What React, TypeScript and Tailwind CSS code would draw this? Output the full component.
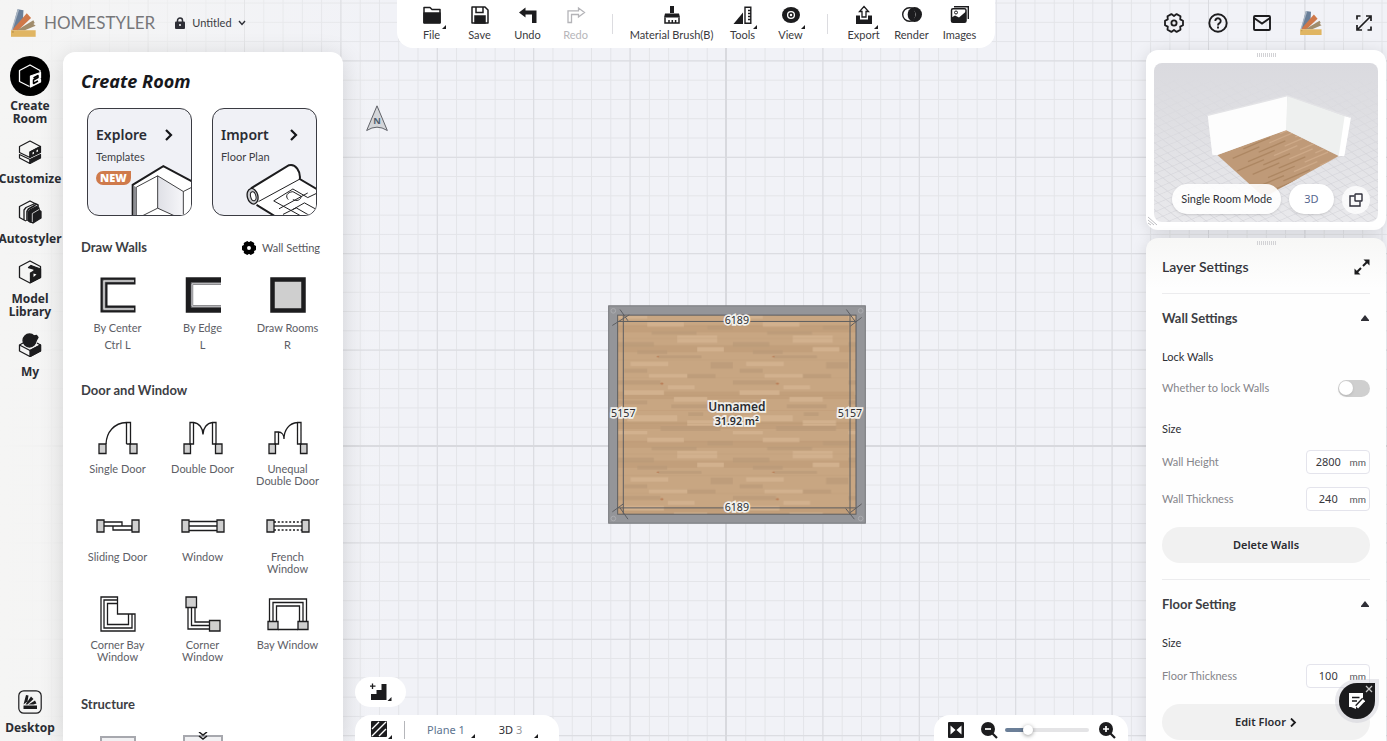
import React, { useState } from "react";

type Icon = () => React.ReactElement;

const INK = "#1c1c1e";

/* ---------- brand ---------- */

function FanLogo({ className }: { className: string }) {
  return (
    <svg viewBox="0 0 76 84" className={className} aria-hidden="true">
      <path d="M20 0 L38 3 L36 34 L8 64 L4 62Z" fill="#6a7f99" />
      <path d="M48 12 L61 27 L22 64 L3 64Z" fill="#cf7849" />
      <path d="M68 34 L72 42 L68 45 L75 50 L42 64 L18 64Z" fill="#a08c6c" />
      <path d="M1 64 L20 0 L25 1 L5 64Z" fill="#a9b5c3" />
      <path d="M0 64 H75 V84 H0Z" fill="#e0b562" />
      <circle cx="6" cy="69" r="1.6" fill="#8a6a2e" />
    </svg>
  );
}

/* ---------- toolbar icons ---------- */

const FileIcon: Icon = () => (
  <svg viewBox="0 0 20 20" className="size-5" fill="none" stroke={INK} strokeWidth="1.5" strokeLinejoin="round">
    <path d="M2 17.500V2.500h6l2 2h8v13Z" />
    <path d="M2 8h16v10H2Z" fill={INK} />
  </svg>
);
const SaveIcon: Icon = () => (
  <svg viewBox="0 0 20 20" className="size-5" fill="none" stroke={INK} strokeWidth="1.5">
    <path d="M2 2h13l3 3v13H2Z" strokeLinejoin="round" />
    <path d="M6 2v5.500h7V2" />
    <path d="M5 11h10v7H5Z" fill={INK} />
  </svg>
);
const UndoIcon: Icon = () => (
  <svg viewBox="0 0 20 20" className="size-5" fill={INK}>
    <path d="M1 7.500 7.500 2.500V5.500H18.500V18H14V9.500H7.500V12.500Z" />
  </svg>
);
const RedoIcon: Icon = () => (
  <svg viewBox="0 0 20 20" className="size-5" fill="none" stroke="#b4b4b8" strokeWidth="1.300">
    <path d="M18.500 7.500 12.500 3V5.800H2V17.500H5.500V9.500H12.500V12Z" />
  </svg>
);
const BrushIcon: Icon = () => (
  <svg viewBox="0 0 20 20" className="size-5" fill={INK}>
    <path d="M8 1h4v7H8Z M3 8.500h14l1 4H2Z" />
    <path d="M3 12.500v5.500h14v-5.500M7 18v-3M10.300 18v-3M13.600 18v-3" fill="none" stroke={INK} strokeWidth="1.500" />
  </svg>
);
const ToolsIcon: Icon = () => (
  <svg viewBox="0 0 20 20" className="size-5" fill={INK}>
    <path d="M10 7.500V19H0.500Z" />
    <path d="M12 2.200h5.800v16H12ZM15 5.500h3M15 8.500h3M15 11.500h3M15 14.500h3" fill="none" stroke={INK} strokeWidth="1.400" />
  </svg>
);
const ViewIcon: Icon = () => (
  <svg viewBox="0 0 20 20" className="size-5">
    <ellipse cx="10" cy="10" rx="9" ry="8" fill={INK} />
    <circle cx="10" cy="10" r="3.400" fill="none" stroke="#fff" strokeWidth="1.300" />
    <circle cx="10" cy="10" r="1.200" fill="#fff" />
  </svg>
);
const ExportIcon: Icon = () => (
  <svg viewBox="0 0 20 20" className="size-5">
    <path d="M2 10.500h4v4h8v-4h4V19H2Z" fill={INK} />
    <path d="M10 1.500 14.500 6.500H12V12H8V6.500H5.500Z" fill="#fff" stroke={INK} strokeWidth="1.300" />
  </svg>
);
const RenderIcon: Icon = () => (
  <svg viewBox="0 0 20 20" className="size-5">
    <circle cx="12.500" cy="9.500" r="7.500" fill={INK} />
    <circle cx="7.500" cy="9.500" r="6.800" fill="#fff" stroke={INK} strokeWidth="1.400" />
    <ellipse cx="9.500" cy="9.500" rx="3.800" ry="6" fill={INK} />
  </svg>
);
const ImagesIcon: Icon = () => (
  <svg viewBox="0 0 20 20" className="size-5">
    <path d="M4 1.700h14.300V14" fill="none" stroke={INK} strokeWidth="1.400" />
    <rect x="1.500" y="3.700" width="14.500" height="13.500" rx="1.500" fill="#fff" stroke={INK} strokeWidth="1.500" />
    <path d="M1.500 12.500 5 10.500 9 12.500 16 6.500V17H1.500Z" fill={INK} />
    <circle cx="6" cy="7.500" r="1.500" fill="none" stroke={INK} />
  </svg>
);

function ToolButton({ label, icon: Glyph, menu, muted, wide }: { label: string; icon: Icon; menu?: boolean; muted?: boolean; wide?: boolean }) {
  return (
    <button type="button" disabled={muted} className={`flex flex-col items-center pt-[5px] ${wide ? "w-[94px]" : "w-12"}`}>
      <span className="relative flex size-5 items-center justify-center">
        <Glyph />
        {menu && (
          <svg viewBox="0 0 4 4" className="absolute -right-1 -bottom-1 size-1" aria-hidden="true">
            <path d="M4 0V4H0Z" fill={INK} />
          </svg>
        )}
      </span>
      <span className={`mt-0.5 text-[11px] leading-4 whitespace-nowrap ${muted ? "text-[#b6b6ba]" : "text-[#3a3a40]"}`}>{label}</span>
    </button>
  );
}

function Separator() {
  return (
    <div className="flex w-[25px] items-center justify-center">
      <span className="h-5 w-px bg-[#dcdce0]" />
    </div>
  );
}

/* ---------- left rail ---------- */

const CreateIcon: Icon = () => (
  <svg viewBox="0 0 24 24" className="size-6" fill="none" stroke="#fff" strokeWidth="1.300" strokeLinejoin="round">
    <path d="M11.500 22.500 1.500 17.500V6.500L12 1l10 5.500V8" />
    <path d="M22.500 8.500V14L21 15L22.500 15.500V18L12.500 23V12Z" fill="#fff" />
    <path d="M15.500 14 20 11.500V13.500L15.500 16V19.500L20 17" stroke="#000" strokeWidth="1.500" />
  </svg>
);
const CustomizeIcon: Icon = () => (
  <svg viewBox="0 0 24 24" className="size-6" fill="none" stroke={INK} strokeWidth="1.200" strokeLinejoin="round">
    <path d="M1.500 12.500V6.500L12 1l10.500 5.500L12 12V17.500Z" />
    <path d="M1.500 14.500 12 19.500V23.500L1.500 18Z" />
    <path d="M12 12 22.500 6.500v6L12 17.500Z" fill={INK} />
    <path d="M12 19.500 22.500 14.500v3.500L12 23.500Z" fill={INK} />
    <path d="M14.500 14.500v-2l1.500-0.800v2ZM18.500 12.200v-2l1.500-0.800v2Z" fill="#f3f3f3" stroke="none" />
  </svg>
);
const AutostylerIcon: Icon = () => (
  <svg viewBox="0 0 24 24" className="size-6" fill="none" stroke={INK} strokeWidth="1.300" strokeLinejoin="round">
    <path d="M6 20 1.500 17.500V6.500L12 1l5 2.500L8 7.500L6 10V20L8 21" />
    <path d="M17 3.500 20 5V7M9 21V11.500L10.500 9L17.500 5" strokeWidth="1.600" />
    <path d="M10.500 21V12L12.500 9.500 18.500 6.500 21 8V10L15 13V22.500L12 22Z" fill={INK} />
    <path d="M15 13.500 21 10 23 11.500V18L15 23Z" fill={INK} />
    <path d="M14.300 22V13.500L21 9.500" stroke="#f3f3f3" strokeWidth="0.800" />
  </svg>
);
const LibraryIcon: Icon = () => (
  <svg viewBox="0 0 24 24" className="size-6" fill="none" stroke={INK} strokeWidth="1.300" strokeLinejoin="round">
    <path d="M12 1 1.500 6.500V17.500L12 23 22.500 17.500V6.500Z" />
    <path d="M10.500 7.500 13 5.500 22.500 9v8.500L12.500 22.500V13L16 11V9Z" fill={INK} />
    <path d="m15.500 13.500 3 1-3 2.500Z" fill="#fff" stroke="none" />
  </svg>
);
const MyIcon: Icon = () => (
  <svg viewBox="0 0 24 24" className="size-6" fill="none" stroke={INK} strokeWidth="1.300" strokeLinejoin="round">
    <path d="M5 10 1.500 12v6L12 23.500 22.500 18v-6L19 10" />
    <path d="M12 17.500 22.500 12v6L12 23.500Z" fill={INK} />
    <path d="M1.500 12 12 17.500 22.500 12" />
    <circle cx="11.500" cy="7.500" r="6.500" fill={INK} />
    <path d="M14 3.500 18.500 2.500 20 4.500 18 8Z" fill={INK} />
  </svg>
);

const rail: { lines: string[]; icon: Icon }[] = [
  { lines: ["Customize"], icon: CustomizeIcon },
  { lines: ["Autostyler"], icon: AutostylerIcon },
  { lines: ["Model", "Library"], icon: LibraryIcon },
  { lines: ["My"], icon: MyIcon },
];

function RailLabel({ lines }: { lines: string[] }) {
  return (
    <span className="flex flex-col items-center font-['Noto_Sans'] text-[12px] leading-[13px] font-bold text-[#2b2d33]">
      {lines.map((l) => (
        <span key={l}>{l}</span>
      ))}
    </span>
  );
}

/* ---------- catalogue drawings ---------- */

const G = "#cfcfcf";
const line = { fill: "none", stroke: INK, strokeWidth: 1.3 } as const;

const ByCenter: Icon = () => (
  <svg viewBox="0 0 36 36" className="size-9">
    <path d="M35.500 4H4V32H35.500" fill="none" stroke={INK} strokeWidth="7" />
    <path d="M34 4H4V32H34" fill="none" stroke="#8c8c8e" strokeWidth="2.600" />
    <path d="M34 4H4V32H34" fill="none" stroke="#e8e8e8" strokeWidth="1" />
  </svg>
);
const ByEdge: Icon = () => (
  <svg viewBox="0 0 36 36" className="size-9">
    <path d="M36 3H3.500V33H36" fill="none" stroke={INK} strokeWidth="5.500" />
    <path d="M36 6.800H7V29.200H36" fill="none" stroke="#6e6e72" strokeWidth="2.400" />
    <path d="M36 6.800H7V29.200H36" fill="none" stroke="#d5d5d8" strokeWidth="1" />
  </svg>
);
const DrawRooms: Icon = () => (
  <svg viewBox="0 0 36 36" className="size-9">
    <rect x="2.500" y="2.500" width="31" height="31" fill={G} stroke={INK} strokeWidth="4.500" />
  </svg>
);
const SingleDoor: Icon = () => (
  <svg viewBox="0 0 40 34" className="h-[34px] w-10" {...line}>
    <path d="M1 23h7v9.500H1ZM32 23h7v9.500h-7Z" fill={G} />
    <path d="M8 23C8.500 11 16 2 28.500 1.500V23M28.500 1.500H32.500V23H28.500" />
  </svg>
);
const DoubleDoor: Icon = () => (
  <svg viewBox="0 0 40 34" className="h-[34px] w-10" {...line}>
    <path d="M1 23h6.500v9.500H1ZM32.500 23H39v9.500h-6.500Z" fill={G} />
    <path d="M7 23V1.500H10.500V23ZM29.500 23V1.500H33V23ZM10.500 1.500C16 2 20 7 20 13.500 20 7 24 2 29.500 1.500" />
  </svg>
);
const UnequalDoor: Icon = () => (
  <svg viewBox="0 0 40 34" className="h-[34px] w-10" {...line}>
    <path d="M1 23h6.500v9.500H1ZM32.500 23H39v9.500h-6.500Z" fill={G} />
    <path d="M7 23V11H10.500V23ZM29.500 23V1.500H33V23ZM10.500 11C13.500 11 16 13.500 16 18 16 9 21 2 29.500 1.500" />
  </svg>
);
const SlidingDoor: Icon = () => (
  <svg viewBox="0 0 44 14" className="h-3.5 w-11" {...line}>
    <path d="M8 3h18v4H8M17 7h19v4H17Z" />
    <path d="M1 1h7v12H1ZM36 1h7v12h-7Z" fill={G} />
  </svg>
);
const WindowIcon: Icon = () => (
  <svg viewBox="0 0 44 14" className="h-3.5 w-11" {...line}>
    <path d="M8 2.500h28M8 7h28M8 11.500h28" />
    <path d="M1 1h7v12H1ZM36 1h7v12h-7Z" fill={G} />
  </svg>
);
const FrenchWindow: Icon = () => (
  <svg viewBox="0 0 44 14" className="h-3.5 w-11" {...line}>
    <path d="M8 7h28" />
    <path d="M8 3h28M8 11h28" strokeDasharray="2 1.800" />
    <path d="M1 1h7v12H1ZM36 1h7v12h-7Z" fill={G} />
  </svg>
);
const CornerBay: Icon = () => (
  <svg viewBox="0 0 36 36" className="size-9" {...line}>
    <path d="M1 1H17.500V18H35V35H1Z" />
    <path d="M17.500 4H4V32H32V18M17.500 7.500H7.500V28.500H28.500V18" />
  </svg>
);
const CornerWindow: Icon = () => (
  <svg viewBox="0 0 36 36" className="size-9" {...line}>
    <path d="M3 11V33H25M6.500 11V29.500H25M10 11V26H25" />
    <path d="M1 1h10.500v10.500H1ZM24.500 24.500H35V35H24.500Z" fill={G} />
  </svg>
);
const BayWindow: Icon = () => (
  <svg viewBox="0 0 42 34" className="h-[34px] w-[42px]" {...line}>
    <path d="M2.500 24V2H39.500V24M6 24V5.500H36V24M9.500 24V9H32.500V24M11 32.500H31" />
    <path d="M1 24.500h10v8H1ZM31 24.500h10v8H31Z" fill={G} />
  </svg>
);

const walls: { labels: string[]; icon: Icon }[] = [
  { labels: ["By Center", "Ctrl L"], icon: ByCenter },
  { labels: ["By Edge", "L"], icon: ByEdge },
  { labels: ["Draw Rooms", "R"], icon: DrawRooms },
];
const openings: { label: string; icon: Icon }[] = [
  { label: "Single Door", icon: SingleDoor },
  { label: "Double Door", icon: DoubleDoor },
  { label: "Unequal Double Door", icon: UnequalDoor },
  { label: "Sliding Door", icon: SlidingDoor },
  { label: "Window", icon: WindowIcon },
  { label: "French Window", icon: FrenchWindow },
  { label: "Corner Bay Window", icon: CornerBay },
  { label: "Corner Window", icon: CornerWindow },
  { label: "Bay Window", icon: BayWindow },
];

function Chevron() {
  return (
    <svg viewBox="0 0 8 12" className="h-3 w-2" fill="none" stroke="#15161a" strokeWidth="2.200">
      <path d="M1 1 6 6 1 11" />
    </svg>
  );
}

function ExploreArt() {
  return (
    <svg viewBox="395 490 180 155" className="absolute right-0 bottom-0 h-[52px] w-[60px]" aria-hidden="true">
      <defs>
        <linearGradient id="wallShade" x1="0" x2="1">
          <stop offset="0" stopColor="#dfe0e6" />
          <stop offset="1" stopColor="#f6f6f9" />
        </linearGradient>
      </defs>
      <path d="M400 650V555L492 500 578 545V650Z" fill="#fff" />
      <path d="M475 528 552 575V650H530L475 625Z" fill="url(#wallShade)" />
      <path d="M400 650V555L492 499 578 545" fill="none" stroke={INK} strokeWidth="6" />
      <path d="M411 650V562L475 528 552 575V650M475 528V625L425 650M475 625 530 650M552 575 578 562" fill="none" stroke={INK} strokeWidth="2.500" />
      <path d="M403 558 411 562V650H402Z" fill="#8c8d92" />
    </svg>
  );
}

function ImportArt() {
  return (
    <svg viewBox="735 488 215 157" className="absolute right-0 bottom-0 h-[53px] w-[71px]" aria-hidden="true">
      <path d="M755 566 868 496C888 490 904 515 901 538L955 570V650H815L768 612Z" fill="#fff" />
      <path d="M776 606 901 538" stroke={INK} strokeWidth="3" />
      <path d="M753 566 868 496C888 490 904 515 901 538L955 570M770 616 825 650" fill="none" stroke={INK} strokeWidth="6" />
      <ellipse cx="758" cy="590" rx="16" ry="24" transform="rotate(-14 758 590)" fill="#c8c9cd" stroke={INK} strokeWidth="4" />
      <ellipse cx="760" cy="590" rx="8" ry="14" transform="rotate(-14 760 590)" fill="#fff" stroke={INK} strokeWidth="3" />
      <path d="M822 604 880 568 925 594 950 582M822 604 905 650M838 628 925 580M866 600C856 590 862 578 880 576L905 590C905 602 890 606 880 600M880 630 915 610 955 632M850 645 890 625 930 648" fill="none" stroke={INK} strokeWidth="3" />
    </svg>
  );
}

/* ---------- floor plan ---------- */

const lightPlanks = [
  [40, 139, 113, 13], [95, 176, 115, 12], [152, 210, 80, 12], [0, 0, 90, 10], [180, 60, 120, 22],
  [240, 95, 80, 14], [20, 225, 120, 14], [170, 245, 100, 14], [30, 300, 150, 18], [210, 315, 100, 16], [90, 20, 110, 14],
];
const darkPlanks = [
  [103, 47, 135, 11], [123, 120, 130, 9], [210, 176, 85, 12], [162, 267, 120, 12], [213, 291, 45, 11],
  [0, 80, 110, 14], [60, 104, 90, 12], [270, 30, 77, 13], [0, 195, 130, 13], [280, 140, 67, 20], [0, 255, 90, 12], [130, 332, 180, 15], [20, 160, 70, 12],
];

function PlankDefs() {
  return (
    <pattern id="planks" width="347" height="347" x="52" y="58" patternUnits="userSpaceOnUse">
      <rect width="347" height="347" fill="#c8a682" />
      <path d="M0 40H347M0 100H347M0 240H347M0 330H347" stroke="#c29f7b" strokeWidth="22" />
      {darkPlanks.map(([x, y, w, h]) => (
        <rect key={`d${x}-${y}`} x={x} y={y} width={w} height={h} fill="#b99a78" opacity="0.7" />
      ))}
      {lightPlanks.map(([x, y, w, h]) => (
        <rect key={`l${x}-${y}`} x={x} y={y} width={w} height={h} fill="#d2b18e" />
      ))}
      <path d="M0 33H347M0 69H347M0 134H347M0 188H347M0 240H347M0 286H347M0 325H347" stroke="#b6936f" strokeWidth="1.500" opacity="0.5" />
      <ellipse cx="134" cy="205" rx="5" ry="3" fill="#b97c55" />
      <ellipse cx="122" cy="124" rx="4" ry="2" fill="#b97c55" />
    </pattern>
  );
}

function RoomPlan() {
  const halo = { stroke: "#f1f0ec", strokeWidth: 10, paintOrder: "stroke" as const, textAnchor: "middle" as const, fill: "#2b2c30" };
  return (
    <svg viewBox="24 27 775 657" className="absolute top-[305px] left-[608px] h-[219px] w-[258px] font-['Noto_Sans',sans-serif]" role="img" aria-label="Unnamed room">
      <defs>
        <PlankDefs />
      </defs>
      <rect x="26" y="29" width="771" height="653" fill="#949599" stroke="#77787c" strokeWidth="3" />
      <rect x="53" y="57" width="716" height="598" fill="url(#planks)" stroke="#5c5d60" strokeWidth="3" />
      <path d="M70 57V655M751 57V655M53 76H769M53 636H769" stroke="#5c5d60" strokeWidth="3" />
      <path d="M37 88 88 56M60 40 84 74M752 90 786 64M740 40 768 78M37 648 70 624M60 636 84 670M752 650 786 624M738 638 764 670" stroke="#5c5d60" strokeWidth="3" />
      <g fill="none" stroke="#abacb0" strokeWidth="3">
        <circle cx="40" cy="44" r="7" />
        <circle cx="783" cy="44" r="7" />
        <circle cx="40" cy="668" r="7" />
        <circle cx="783" cy="668" r="7" />
      </g>
      <g {...halo} fontSize="32">
        <text x="411" y="84">6189</text>
        <text x="411" y="645">6189</text>
        <text x="70" y="363">5157</text>
        <text x="751" y="363">5157</text>
      </g>
      <g {...halo} fontWeight="600">
        <text x="411" y="345" fontSize="36">Unnamed</text>
        <text x="411" y="387" fontSize="32">31.92 m²</text>
      </g>
    </svg>
  );
}

function Backdrop() {
  return (
    <svg className="absolute inset-0 size-full" aria-hidden="true">
      <defs>
        <pattern id="fine" width="19.280" height="19.280" x="726" y="446" patternUnits="userSpaceOnUse">
          <path d="M0 0.500H19.280M0.500 0V19.280" stroke="#e3e4e8" />
        </pattern>
        <pattern id="coarse" width="96.400" height="96.400" x="726" y="446" patternUnits="userSpaceOnUse">
          <path d="M0 0.500H96.400M0.500 0V96.400" stroke="#dadbe0" />
        </pattern>
      </defs>
      <rect width="100%" height="100%" fill="#f1f2f7" />
      <rect width="100%" height="100%" fill="url(#fine)" />
      <rect width="100%" height="100%" fill="url(#coarse)" />
      <path d="M726 0V2000M0 446H4000" stroke="#d8d9de" strokeWidth="2" />
    </svg>
  );
}

function Compass() {
  return (
    <svg viewBox="0 0 66 80" className="absolute top-[105px] left-[366px] h-[27px] w-[22px]" aria-label="North">
      <path d="M33 2 64 76Q48 66 33 66T2 76Z" fill="#d3d5d9" stroke="#606268" strokeWidth="3" strokeLinejoin="round" />
      <text x="33" y="56" textAnchor="middle" fontSize="28" fontWeight="700" fontFamily="Noto Sans" fill="#4e5f70">N</text>
    </svg>
  );
}

/* ---------- right side ---------- */

function Grip() {
  return (
    <div className="flex h-1 justify-center gap-px">
      {Array.from({ length: 10 }, (_, i) => (
        <span key={i} className="w-px bg-[#d2d2d5]" />
      ))}
    </div>
  );
}

const seams = Array.from({ length: 12 }, (_, i) => i + 1);

function Preview() {
  return (
    <svg viewBox="72 189 672 477" preserveAspectRatio="xMidYMid slice" className="absolute inset-0 size-full" role="img" aria-label="3D preview">
      <defs>
        <linearGradient id="sky" x2="0" y2="1">
          <stop offset="0" stopColor="#dadadf" />
          <stop offset="0.300" stopColor="#dedee2" />
          <stop offset="1" stopColor="#e9e9ec" />
        </linearGradient>
        <pattern id="mesh" width="24" height="24" patternUnits="userSpaceOnUse" patternTransform="matrix(1 -0.420 0.800 0.620 0 0)">
          <path d="M0 0H24M0 0V24" stroke="#d0d0d5" strokeWidth="3" />
        </pattern>
        <linearGradient id="fade" x2="0" y2="1">
          <stop offset="0.100" stopColor="#000" />
          <stop offset="0.600" stopColor="#fff" />
        </linearGradient>
        <mask id="ground">
          <rect x="72" y="189" width="672" height="477" fill="url(#fade)" />
        </mask>
        <clipPath id="floorClip">
          <path d="M262 465 468 390 626 468 402 592Z" />
        </clipPath>
      </defs>
      <rect x="72" y="189" width="672" height="477" fill="url(#sky)" />
      <rect x="72" y="189" width="672" height="477" fill="url(#mesh)" mask="url(#ground)" />
      <g clipPath="url(#floorClip)">
        <rect x="240" y="380" width="400" height="220" fill="#bf9a78" />
        {seams.map((n) => {
          const x = 262 + n * 11;
          const y = 465 + n * 10;
          const shift = (n * 67) % 110;
          return (
            <g key={n} strokeWidth="4">
              <path d={`M${x + shift} ${y - shift * 0.42}l80 -34`} stroke="#ad8763" />
              <path d={`M${x + shift + 110} ${y - (shift + 110) * 0.42}l70 -30`} stroke="#cda988" />
            </g>
          );
        })}
      </g>
      <path d="M233 346 472 287 470 390 260 466 247 464Z" fill="#fdfdfd" />
      <path d="M472 287 650 350 628 468 468 390Z" fill="#eef0ef" />
      <path d="M644 349 663 352 643 468H626Z" fill="#fff" />
      <path d="M233 346 472 287 662 352" fill="none" stroke="#e3e3e6" strokeWidth="4" />
    </svg>
  );
}

function SectionHeading({ title }: { title: string }) {
  return (
    <button type="button" className="flex h-5 w-full items-center justify-between pr-px">
      <span className="text-[13px] leading-5 font-bold text-[#3d3e44]">{title}</span>
      <svg viewBox="0 0 8 6" className="h-1.5 w-2" aria-hidden="true">
        <path d="M4 0 8 5V6H0V5Z" fill="#2f2f36" />
      </svg>
    </button>
  );
}

function Field({ id, label, initial }: { id: string; label: string; initial: string }) {
  const [value, setValue] = useState(initial);
  return (
    <div className="flex h-6 items-center justify-between">
      <label htmlFor={id} className="text-[11px] text-[#85858a]">{label}</label>
      <span className="flex h-6 w-16 items-center rounded border border-[#e4e4ec] bg-white pr-[3px]">
        <input id={id} value={value} onChange={(e) => setValue(e.target.value)} className="w-10 min-w-0 flex-1 bg-transparent text-center font-['Noto_Sans'] text-[11px] text-[#37383d] outline-none" />
        <span className="text-[10px] text-[#55565c]">mm</span>
      </span>
    </div>
  );
}

const gear =
  "M19 7.800V12.200L16.200 13.600 16.500 16.700 12.600 18.900 10 17 7.400 18.900 3.500 16.700 3.800 13.600 1 12.200V7.800L3.800 6.400 3.500 3.300 7.400 1.100 10 3 12.600 1.100 16.500 3.300 16.200 6.400Z";

/* ---------- page ---------- */

export default function App() {
  const [zoom, setZoom] = useState(24);
  const [locked, setLocked] = useState(false);

  return (
    <div className="relative flex h-screen flex-col overflow-hidden font-['Lato',sans-serif] text-[#2c2d33]">
      <Backdrop />
      <div className="absolute inset-y-0 left-0 w-[400px] bg-linear-to-r from-[#f5f5f4] via-[#f5f5f4]/50 to-transparent" />
      <Compass />
      <RoomPlan />

      <header className="relative grid h-12 shrink-0 grid-cols-[1fr_auto_1fr]">
        <div className="flex items-center pb-0.5 pl-[11px]">
          <FanLogo className="h-7 w-[25px]" />
          <span className="ml-2 text-[17px] leading-6 text-[#77777a]">HOMESTYLER</span>
          <svg viewBox="0 0 10 12" className="ml-5 h-3 w-2.5" aria-hidden="true">
            <path d="M2.500 5V3.500a2.500 2.500 0 0 1 5 0V5" fill="none" stroke="#2d2e35" strokeWidth="1.500" />
            <rect y="4.500" width="10" height="7.500" rx="1" fill="#2d2e35" />
            <circle cx="5" cy="8" r="1" fill="#fff" />
          </svg>
          <button type="button" className="ml-[7px] flex items-center gap-1.5 text-[11px] text-[#3a3b42]">
            Untitled
            <svg viewBox="0 0 8 6" className="h-1.5 w-2" fill="none" stroke="#2d2e35" strokeWidth="1.400">
              <path d="M1 1 4 4.500 7 1" />
            </svg>
          </button>
        </div>

        <nav className="ml-1 flex h-12 rounded-b-2xl bg-white px-[11px]">
          <ToolButton label="File" icon={FileIcon} menu />
          <ToolButton label="Save" icon={SaveIcon} />
          <ToolButton label="Undo" icon={UndoIcon} />
          <ToolButton label="Redo" icon={RedoIcon} muted />
          <Separator />
          <ToolButton label="Material Brush(B)" icon={BrushIcon} wide />
          <ToolButton label="Tools" icon={ToolsIcon} menu />
          <ToolButton label="View" icon={ViewIcon} menu />
          <Separator />
          <ToolButton label="Export" icon={ExportIcon} menu />
          <ToolButton label="Render" icon={RenderIcon} />
          <ToolButton label="Images" icon={ImagesIcon} />
        </nav>

        <div className="flex items-center justify-end gap-6 pr-[9px] pb-0.5">
          <button type="button" aria-label="Settings">
            <svg viewBox="0 0 20 20" className="size-5" fill="none" stroke={INK} strokeWidth="1.800" strokeLinejoin="round">
              <path d={gear} />
              <circle cx="10" cy="10" r="2.600" />
            </svg>
          </button>
          <button type="button" aria-label="Help">
            <svg viewBox="0 0 20 20" className="size-5" fill="none" stroke={INK} strokeWidth="1.900">
              <circle cx="10" cy="10" r="8.700" />
              <path d="M7.300 8a2.700 2.700 0 1 1 4.200 2.200Q10 11 10 12.500M10 13.600V15.400" />
            </svg>
          </button>
          <button type="button" aria-label="Messages">
            <svg viewBox="0 0 20 20" className="size-5" fill="none" stroke={INK} strokeWidth="1.900">
              <rect x="2" y="3" width="16" height="14" rx="1" />
              <path d="M2 5 10 10.500 18 5" />
            </svg>
          </button>
          <button type="button" aria-label="Account" className="flex w-[30px] justify-center">
            <FanLogo className="h-6 w-[22px]" />
          </button>
          <button type="button" aria-label="Full screen" className="flex w-7 justify-center">
            <svg viewBox="0 0 16 16" className="size-4" fill="none" stroke={INK} strokeWidth="1.700">
              <path d="M1 4.500V1H4.500M10 1H15V6M15 11.500V15H11.500M6 15H1V10M2 14 14 2" />
            </svg>
          </button>
        </div>
      </header>

      <div className="relative flex min-h-0 flex-1">
        <nav className="flex w-[60px] shrink-0 flex-col items-center pt-2">
          <button type="button" className="flex flex-col items-center">
            <span className="flex size-10 items-center justify-center rounded-full bg-black">
              <CreateIcon />
            </span>
            <span className="mt-[3px]">
              <RailLabel lines={["Create", "Room"]} />
            </span>
          </button>
          {rail.map((item) => (
            <button type="button" key={item.lines[0]} className="mt-[15px] flex flex-col items-center gap-2">
              <item.icon />
              <RailLabel lines={item.lines} />
            </button>
          ))}
          <button type="button" className="mt-auto mb-[7px] flex flex-col items-center gap-[7px]">
            <svg viewBox="0 0 24 24" className="size-6" aria-hidden="true">
              <rect x="0.800" y="0.800" width="22.400" height="22.400" rx="5" fill="none" stroke={INK} strokeWidth="1.200" />
              <path d="M5.500 15.500h13.500V19H5.500Z M5.500 14.500 8 5l2.500.500-1 6Z M7.500 14.500 13 6.500l2.500 2.500-6 5.500Z M10.500 14.500 17 10.500l1.500 3-3 1Z" fill={INK} />
            </svg>
            <RailLabel lines={["Desktop"]} />
          </button>
        </nav>

        <aside className="mt-1 ml-[3px] w-[280px] shrink-0 overflow-hidden rounded-t-xl bg-white shadow-[0_4px_24px_rgba(0,0,0,0.14)]">
          <h1 className="px-[18px] pt-[17px] font-['Noto_Sans'] text-[18px] leading-6 font-bold text-[#17181c] italic">Create Room</h1>
          <div className="mt-[15px] flex gap-5 px-6">
            <button type="button" className="relative flex h-[108px] w-[105px] flex-col items-start overflow-hidden rounded-xl border border-[#3a3b42] bg-[#f0f1f6] px-2 pt-4 text-left">
              <ExploreArt />
              <span className="flex w-full items-center justify-between pr-2.5">
                <span className="font-['Noto_Sans'] text-[14px] leading-5 font-semibold text-[#2a2c33]">Explore</span>
                <Chevron />
              </span>
              <span className="mt-1 text-[11px] leading-4 text-[#3c3d44]">Templates</span>
              <span className="mt-1.5 flex h-3.5 items-center rounded-l-full rounded-tr-sm rounded-br-full bg-[#cf7a4b] px-1 font-['Noto_Sans'] text-[11px] leading-3 font-black text-white">NEW</span>
            </button>
            <button type="button" className="relative flex h-[108px] w-[105px] flex-col items-start overflow-hidden rounded-xl border border-[#3a3b42] bg-[#f0f1f6] px-2 pt-4 text-left">
              <ImportArt />
              <span className="flex w-full items-center justify-between pr-2.5">
                <span className="font-['Noto_Sans'] text-[14px] leading-5 font-semibold text-[#2a2c33]">Import</span>
                <Chevron />
              </span>
              <span className="mt-1 text-[11px] leading-4 text-[#3c3d44]">Floor Plan</span>
            </button>
          </div>

          <div className="mt-5 flex h-6 items-center justify-between pr-[23px] pl-[18px]">
            <h2 className="text-[13px] font-bold text-[#3d3e44]">Draw Walls</h2>
            <button type="button" className="flex items-center gap-1.5 text-[11px] text-[#55565c]">
              <svg viewBox="0 0 20 20" className="size-3.5" aria-hidden="true">
                <path d={gear} fill="#000" stroke="#000" strokeWidth="2" strokeLinejoin="round" />
                <circle cx="10" cy="10" r="2.800" fill="#fff" />
              </svg>
              Wall Setting
            </button>
          </div>
          <div className="mt-[11px] grid grid-cols-3 pr-[13px] pl-3">
            {walls.map((w) => (
              <button type="button" key={w.labels[0]} className="flex flex-col items-center text-[11px] leading-[17px] text-[#5d5e66]">
                <span className="flex h-12 items-center">
                  <w.icon />
                </span>
                {w.labels.map((l) => (
                  <span key={l}>{l}</span>
                ))}
              </button>
            ))}
          </div>

          <h2 className="mt-[25px] px-[18px] text-[13px] leading-6 font-bold text-[#3d3e44]">Door and Window</h2>
          <div className="mt-[11px] grid auto-rows-[88px] grid-cols-3 pr-[13px] pl-3">
            {openings.map((o) => (
              <button type="button" key={o.label} className="flex flex-col items-center text-[11px] leading-3 text-[#5d5e66]">
                <span className="flex h-[50px] shrink-0 items-center">
                  <o.icon />
                </span>
                <span className="w-[68px]">{o.label}</span>
              </button>
            ))}
          </div>

          <h2 className="mt-[15px] px-[18px] text-[13px] leading-6 font-bold text-[#3d3e44]">Structure</h2>
          <div className="mt-4 grid grid-cols-3 justify-items-center pr-[13px] pl-3">
            <svg viewBox="0 0 36 36" className="mt-1 size-9">
              <rect x="1" y="1" width="34" height="34" fill="#f1f1f3" stroke="#a7a8ae" strokeWidth="2" />
            </svg>
            <svg viewBox="0 0 40 40" className="size-10">
              <rect x="1" y="4" width="38" height="34" fill="#f1f1f3" stroke="#a7a8ae" strokeWidth="2" />
              <path d="M8 10H32" stroke="#a7a8ae" />
              <path d="M16 0 20 3 24 0M16 4 20 7 24 4" fill="none" stroke={INK} strokeWidth="1.500" />
            </svg>
          </div>
        </aside>

        <main className="flex min-w-0 flex-1 flex-col justify-end px-3 pb-0">
          <button type="button" aria-label="Add level" className="relative mb-2 flex h-[30px] w-[51px] items-center justify-center rounded-full bg-white">
            <svg viewBox="0 0 22 20" className="h-5 w-[22px]" fill={INK}>
              <path d="M1 18V12H6.500V8H11.500V2H16.500V18Z" />
              <path d="M2.500 1.500V7M0 4.200H5.500" stroke={INK} strokeWidth="1.300" />
              <path d="M21.500 15V19H17.500Z" />
            </svg>
          </button>
          <div className="flex items-start justify-between pr-1.5">
            <div className="flex h-[26px] w-[204px] items-center rounded-t-2xl bg-white pt-1 pl-4 text-[12px]">
              <button type="button" aria-label="Hatching">
                <svg viewBox="0 0 22 18" className="h-[18px] w-[22px]">
                  <rect width="16" height="16" rx="1" fill={INK} />
                  <path d="M1 8 8 1M1 15 15 1M8 15 15 8" stroke="#fff" strokeWidth="1.400" />
                  <path d="M21 14V18H17Z" fill={INK} />
                </svg>
              </button>
              <span className="ml-[11px] h-[18px] w-px bg-[#b5b6ba]" />
              <button type="button" className="ml-[22px] flex items-end gap-1.5 font-['Noto_Sans'] text-[#5d7490]">
                <span className="text-[11px]">Plane 1</span>
                <svg viewBox="0 0 4 4" className="size-1"><path d="M4 0V4H0Z" fill={INK} /></svg>
              </button>
              <button type="button" className="ml-6 flex items-end gap-3 font-['Noto_Sans']">
                <span className="text-[11px]">3D <span className="text-[#97989c]">3</span></span>
                <svg viewBox="0 0 4 4" className="size-1"><path d="M4 0V4H0Z" fill={INK} /></svg>
              </button>
            </div>
            <div className="flex h-[26px] w-[194px] items-center rounded-t-2xl bg-white pt-1 pl-3.5">
              <button type="button" aria-label="Fit">
                <svg viewBox="0 0 16 16" className="size-4">
                  <rect width="16" height="16" rx="1" fill={INK} />
                  <path d="M2.500 3.500 7.500 8 2.500 12.500ZM13.500 3.500 8.500 8 13.500 12.500Z" fill="#fff" />
                </svg>
              </button>
              <button type="button" aria-label="Zoom out" className="ml-[17px]">
                <svg viewBox="0 0 17 17" className="size-[17px]">
                  <path d="M11 11 16 16" stroke={INK} strokeWidth="2.200" />
                  <circle cx="7" cy="7" r="7" fill={INK} />
                  <path d="M4 7H10" stroke="#fff" strokeWidth="1.700" />
                </svg>
              </button>
              <input
                type="range"
                aria-label="Zoom"
                min={0}
                max={100}
                value={zoom}
                onChange={(e) => setZoom(Number(e.target.value))}
                style={{ backgroundImage: `linear-gradient(to right, #6b7f98 ${zoom}%, #e4e4e6 ${zoom}%)` }}
                className="ml-[7px] h-1 w-[84px] appearance-none rounded-full [&::-webkit-slider-thumb]:size-2.5 [&::-webkit-slider-thumb]:appearance-none [&::-webkit-slider-thumb]:rounded-full [&::-webkit-slider-thumb]:bg-white [&::-webkit-slider-thumb]:shadow-[0_1px_4px_rgba(0,0,0,0.4)]"
              />
              <button type="button" aria-label="Zoom in" className="ml-2.5">
                <svg viewBox="0 0 17 17" className="size-[17px]">
                  <path d="M11 11 16 16" stroke={INK} strokeWidth="2.200" />
                  <circle cx="7" cy="7" r="7" fill={INK} />
                  <path d="M4 7H10M7 4V10" stroke="#fff" strokeWidth="1.700" />
                </svg>
              </button>
            </div>
          </div>
        </main>

        <div className="mt-0.5 mr-px flex w-[240px] shrink-0 flex-col gap-2">
          <section className="relative h-[180px] shrink-0 rounded-xl bg-white px-2 pt-[3px] pb-2 shadow-[0_2px_16px_rgba(0,0,0,0.12)]">
            <Grip />
            <div className="relative mt-1.5 flex h-[159px] items-end justify-end gap-2 overflow-hidden rounded-lg p-2">
              <Preview />
              <button type="button" className="relative h-[30px] rounded-full bg-white/90 px-[9px] text-[11px] whitespace-nowrap text-[#2f3036] shadow">Single Room Mode</button>
              <button type="button" className="relative h-[30px] w-[45px] rounded-full bg-white font-['Noto_Sans'] text-[11px] text-[#56668f] shadow">3D</button>
              <button type="button" aria-label="Detach view" className="relative flex size-7 items-center justify-center rounded-full bg-white/80">
                <svg viewBox="0 0 14 14" className="size-3.5" fill="none" stroke="#2e2e3a" strokeWidth="1.400">
                  <path d="M5.500 3H1V13H11V8.500" />
                  <rect x="6" y="1" width="7" height="7" rx="0.500" />
                </svg>
              </button>
            </div>
            <svg viewBox="0 0 10 10" className="absolute bottom-1 left-0.5 size-2.5" stroke="#bcbcc0" aria-hidden="true">
              <path d="M0 1 9 9M0 4 6 9M0 7 3 9" />
            </svg>
          </section>

          <section className="relative min-h-0 flex-1 rounded-t-xl bg-[#fefefe] bg-linear-to-b from-[#f7f7f6] to-[#fefefe] to-10% px-4 pt-[3px] shadow-[0_2px_16px_rgba(0,0,0,0.12)]">
            <Grip />
            <div className="mt-3 flex h-5 items-center justify-between">
              <h2 className="text-[14px] leading-5 font-semibold text-[#34353b]">Layer Settings</h2>
              <button type="button" aria-label="Expand">
                <svg viewBox="0 0 16 16" className="size-4" fill={INK}>
                  <path d="M9.500 0.500H15.500V6.500ZM0.500 9.500V15.500H6.500Z" />
                  <path d="M13 3 9 7M7 9 3 13" stroke={INK} strokeWidth="2" />
                </svg>
              </button>
            </div>
            <hr className="mt-4 mb-3.5 border-[#ececee]" />
            <SectionHeading title="Wall Settings" />
            <h3 className="mt-[21px] text-[11px] leading-4 text-[#2c2d33]">Lock Walls</h3>
            <div className="mt-3.5 flex h-[18px] items-center justify-between">
              <label htmlFor="lock" className="text-[11px] text-[#85858a]">Whether to lock Walls</label>
              <input
                id="lock"
                type="checkbox"
                role="switch"
                checked={locked}
                onChange={(e) => setLocked(e.target.checked)}
                className="flex h-[17px] w-8 appearance-none items-center rounded-full bg-[#cfcfcf] px-px before:size-3.5 before:rounded-full before:bg-white before:shadow checked:justify-end checked:bg-[#2c2d33]"
              />
            </div>
            <h3 className="mt-6 text-[11px] leading-4 text-[#2c2d33]">Size</h3>
            <div className="mt-[13px] flex flex-col gap-[13px]">
              <Field id="wall-height" label="Wall Height" initial="2800" />
              <Field id="wall-thickness" label="Wall Thickness" initial="240" />
            </div>
            <button type="button" className="mt-4 h-9 w-full rounded-full bg-[#f1f1f1] font-['Noto_Sans'] text-[11px] font-semibold text-[#2a2b30]">Delete Walls</button>
            <hr className="mt-4 mb-3.5 border-[#ececee]" />
            <SectionHeading title="Floor Setting" />
            <h3 className="mt-[21px] text-[11px] leading-4 text-[#2c2d33]">Size</h3>
            <div className="mt-[13px]">
              <Field id="floor-thickness" label="Floor Thickness" initial="100" />
            </div>
            <button type="button" className="mt-4 flex h-9 w-full items-center justify-center gap-1 rounded-full bg-[#f1f1f1] font-['Noto_Sans'] text-[11px] font-semibold text-[#2a2b30]">
              Edit Floor
              <svg viewBox="0 0 7 9" className="h-[9px] w-[7px]" fill="none" stroke={INK} strokeWidth="1.800">
                <path d="M1 0.500 5 4.500 1 8.500" />
              </svg>
            </button>
          </section>
        </div>
      </div>

      <button type="button" aria-label="Feedback" className="absolute right-2 bottom-[18px] flex size-11 items-center justify-center rounded-full rounded-tr-lg bg-[#c8c8d2]/40">
        <span className="flex size-9 items-center justify-center rounded-full rounded-tr-lg bg-[#1b1b1d]">
          <svg viewBox="0 0 16 16" className="size-4" fill="none">
            <path d="M0 0H14V6L7 13V16L2 14H0Z" fill="#fff" />
            <path d="M3 4.500H10.500M3 8H8" stroke="#1b1b1d" strokeWidth="1.400" />
            <path d="M8 14 15 6.500" stroke="#1b1b1d" strokeWidth="5" />
            <path d="M8 14.500 15 7" stroke="#fff" strokeWidth="3" />
          </svg>
        </span>
        <svg viewBox="0 0 8 8" className="absolute top-1.5 right-1.5 size-2" stroke="#c9c9c9" strokeWidth="1.300">
          <path d="M1 1 7 7M7 1 1 7" />
        </svg>
      </button>
    </div>
  );
}
